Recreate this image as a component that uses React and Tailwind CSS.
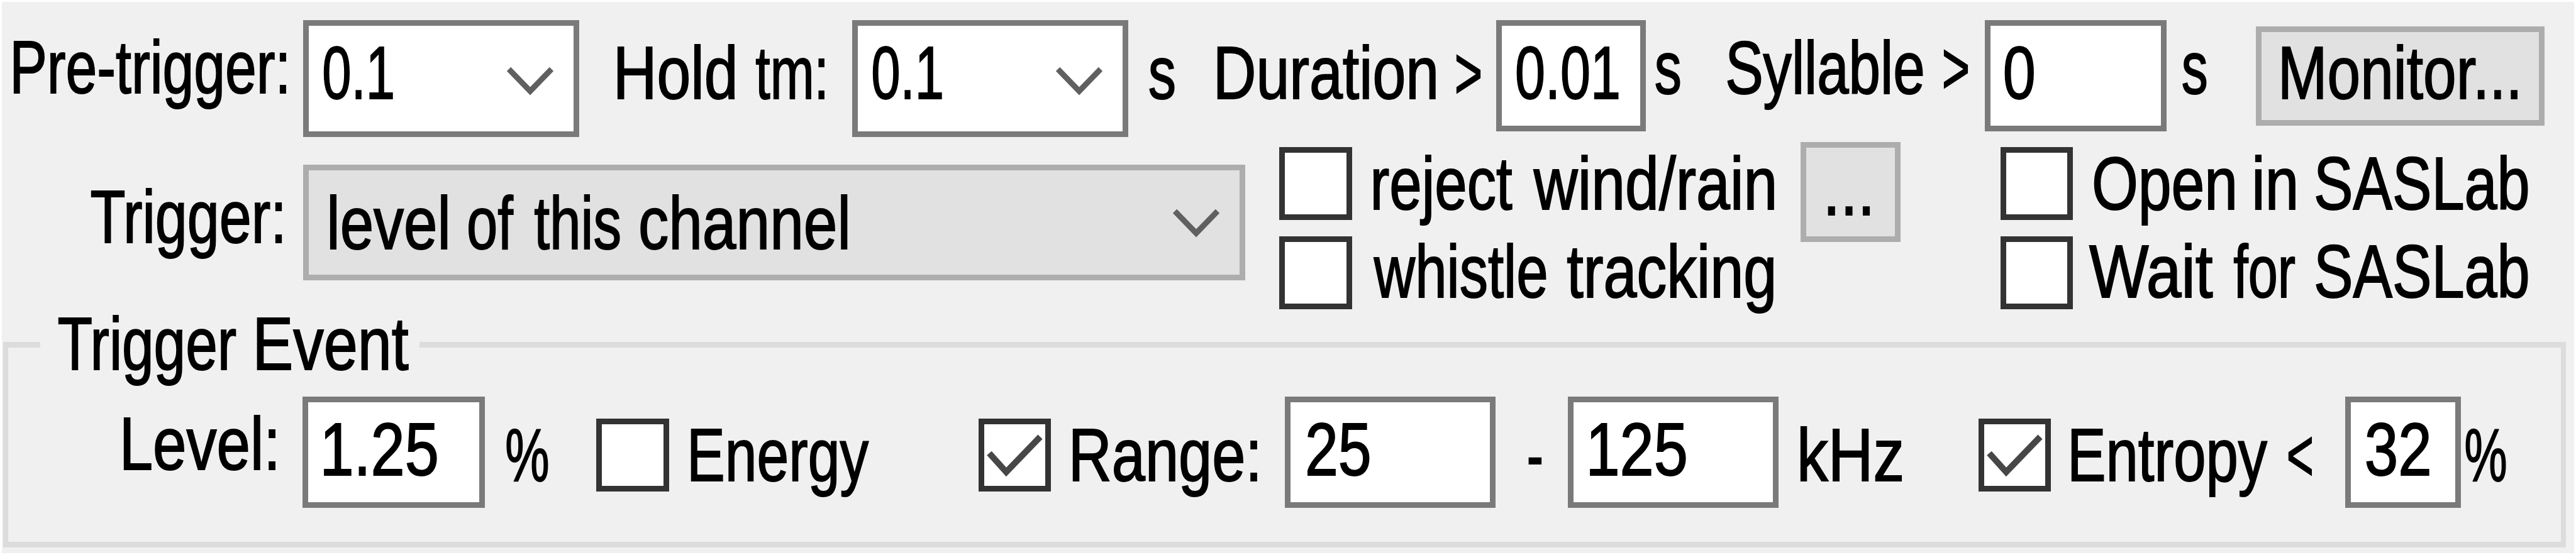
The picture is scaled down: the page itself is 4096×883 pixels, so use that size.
import { useLayoutEffect, useRef, useState } from "react";

const FONT = '118px "Liberation Sans"';

// Condensed label: the glyphs are squeezed so that the ink fills the given width.
function Label({ children, className = "" }) {
  const ref = useRef(null);
  const [transform, setTransform] = useState("none");
  useLayoutEffect(() => {
    const ctx = document.createElement("canvas").getContext("2d");
    ctx.font = FONT;
    const m = ctx.measureText(children);
    const ink = m.actualBoundingBoxLeft + m.actualBoundingBoxRight;
    const scale = ref.current.offsetWidth / ink;
    setTransform(`scaleX(${scale}) translateX(${m.actualBoundingBoxLeft}px)`);
  }, [children]);
  return (
    <div ref={ref} className={`h-[118px] shrink-0 ${className}`}>
      <span className="block w-max origin-left whitespace-pre" style={{ transform }}>
        {children}
      </span>
    </div>
  );
}

function Words({ className = "", children }) {
  return <div className={`flex shrink-0 gap-[34px] ${className}`}>{children}</div>;
}

function Field({ className = "", children }) {
  return (
    <div className={`flex shrink-0 items-start border-[9px] border-[#7a7a7a] bg-white ${className}`}>
      {children}
    </div>
  );
}

function Chevron({ className = "" }) {
  return (
    <svg viewBox="0 0 74 46" className={`h-[46px] w-[74px] shrink-0 ${className}`} fill="none" stroke="#606060" strokeWidth="9">
      <path d="M3 4 L37 39 L71 4" />
    </svg>
  );
}

function Check({ checked = false, className = "" }) {
  return (
    <div className={`h-[116px] shrink-0 border-[9px] border-[#333333] bg-white ${className}`}>
      {checked && (
        <svg viewBox="0 0 98 98" className="size-[98px]" fill="none" stroke="#474747" strokeWidth="10">
          <path d="M8 46 L35 76 L89 20" />
        </svg>
      )}
    </div>
  );
}

function Button({ className = "", children }) {
  return (
    <div className={`flex shrink-0 items-start border-[9px] border-[#adadad] bg-[#e1e1e1] ${className}`}>
      {children}
    </div>
  );
}

export default function App() {
  return (
    <div className="h-[883px] w-[4096px] overflow-hidden border-[3px] border-white bg-[#f0f0f0] font-['Liberation_Sans',sans-serif] text-[118px] leading-[118px] text-black [-webkit-text-stroke:2px_black]">
      <div className="flex h-[221px] items-start">
        <Label className="mt-[45px] ml-[19px] w-[433px]">Pre-trigger:</Label>
        <Field className="mt-[29px] ml-[27px] h-[186px] w-[439px]">
          <Label className="mt-[16px] ml-[24px] w-[109px]">0.1</Label>
          <Chevron className="mt-[65px] ml-[182px]" />
        </Field>
        <Words className="mt-[54px] ml-[61px] w-[329px]">
          <Label className="w-[186px]">Hold</Label>
          <Label className="w-[109px]">tm:</Label>
        </Words>
        <Field className="mt-[29px] ml-[44px] h-[186px] w-[439px]">
          <Label className="mt-[16px] ml-[24px] w-[109px]">0.1</Label>
          <Chevron className="mt-[65px] ml-[182px]" />
        </Field>
        <Label className="mt-[54px] ml-[34px] w-[39px]">s</Label>
        <Words className="mt-[54px] ml-[69px] w-[418px]">
          <Label className="w-[346px]">Duration</Label>
          <Label className="w-[38px]">{">"}</Label>
        </Words>
        <Field className="mt-[29px] ml-[25px] h-[177px] w-[238px]">
          <Label className="mt-[16px] ml-[24px] w-[161px]">0.01</Label>
        </Field>
        <Label className="mt-[46px] ml-[16px] w-[38px]">s</Label>
        <Words className="mt-[46px] ml-[76px] w-[382px]">
          <Label className="w-[310px]">Syllable</Label>
          <Label className="w-[38px]">{">"}</Label>
        </Words>
        <Field className="mt-[29px] ml-[27px] h-[177px] w-[289px]">
          <Label className="mt-[16px] ml-[23px] w-[46px]">0</Label>
        </Field>
        <Label className="mt-[46px] ml-[26px] w-[37px]">s</Label>
        <Button className="mt-[39px] ml-[79px] h-[158px] w-[459px]">
          <Label className="mt-[6px] ml-[33px] w-[374px]">Monitor...</Label>
        </Button>
      </div>

      <div className="flex h-[320px] items-start">
        <Label className="mt-[62px] ml-[142px] w-[303px]">Trigger:</Label>
        <Button className="mt-[38px] ml-[34px] h-[184px] w-[1498px]">
          <Words className="mt-[25px] ml-[34px] w-[822px]">
            <Label className="w-[186px]">level</Label>
            <Label className="w-[71px]">of</Label>
            <Label className="w-[135px]">this</Label>
            <Label className="w-[328px]">channel</Label>
          </Words>
          <Chevron className="mt-[61px] ml-[518px]" />
        </Button>
        <div className="mt-[10px] ml-[54px] flex shrink-0 flex-col gap-[26px]">
          <div className="flex h-[116px] items-start">
            <Check className="w-[116px]" />
            <Words className="-mt-px ml-[34px] w-[636px]">
              <Label className="w-[220px]">reject</Label>
              <Label className="w-[382px]">wind/rain</Label>
            </Words>
          </div>
          <div className="flex h-[116px] items-start">
            <Check className="w-[116px]" />
            <Words className="-mt-[3px] ml-[34px] w-[636px]">
              <Label className="w-[274px]">whistle</Label>
              <Label className="w-[328px]">tracking</Label>
            </Words>
          </div>
        </div>
        <Button className="mt-[2px] ml-[43px] h-[159px] w-[159px]">
          <Label className="mt-[7px] ml-[35px] w-[66px]">...</Label>
        </Button>
        <div className="mt-[10px] ml-[159px] flex shrink-0 flex-col gap-[26px]">
          <div className="flex h-[116px] items-start">
            <Check className="w-[115px]" />
            <Words className="-mt-px ml-[34px] w-[689px]">
              <Label className="w-[222px]">Open</Label>
              <Label className="w-[63px]">in</Label>
              <Label className="w-[336px]">SASLab</Label>
            </Words>
          </div>
          <div className="flex h-[116px] items-start">
            <Check className="w-[115px]" />
            <Words className="-mt-[3px] ml-[26px] w-[697px]">
              <Label className="w-[196px]">Wait</Label>
              <Label className="w-[97px]">for</Label>
              <Label className="w-[336px]">SASLab</Label>
            </Words>
          </div>
        </div>
      </div>

      <div className="ml-[2px] h-[327px] w-[4075px] border-x-8 border-y-[9px] border-[#dcdcdc]">
        <div className="-mt-[65px] ml-[51px] flex h-[118px] w-[603px] bg-[#f0f0f0]">
          <Words className="ml-[29px] w-[556px]">
            <Label className="w-[282px]">Trigger</Label>
            <Label className="w-[240px]">Event</Label>
          </Words>
        </div>
        <div className="flex items-start">
          <Label className="mt-[41px] ml-[184px] w-[241px]">Level:</Label>
          <Field className="mt-[25px] ml-[43px] h-[177px] w-[290px]">
            <Label className="mt-[16px] ml-[25px] w-[179px]">1.25</Label>
          </Field>
          <Label className="mt-[59px] ml-[35px] w-[65px]">%</Label>
          <Check className="mt-[60px] ml-[77px] w-[116px]" />
          <Label className="mt-[59px] ml-[35px] w-[282px]">Energy</Label>
          <Check checked className="mt-[60px] ml-[175px] w-[115px]" />
          <Label className="mt-[59px] ml-[35px] w-[293px]">Range:</Label>
          <Field className="mt-[25px] ml-[44px] h-[177px] w-[335px]">
            <Label className="mt-[16px] ml-[27px] w-[98px]">25</Label>
          </Field>
          <Label className="mt-[59px] ml-[53px] w-[20px]">-</Label>
          <Field className="mt-[25px] ml-[42px] h-[177px] w-[335px]">
            <Label className="mt-[16px] ml-[26px] w-[152px]">125</Label>
          </Field>
          <Label className="mt-[59px] ml-[35px] w-[161px]">kHz</Label>
          <Check checked className="mt-[60px] ml-[122px] w-[115px]" />
          <Words className="mt-[59px] ml-[33px] w-[382px]">
            <Label className="w-[311px]">Entropy</Label>
            <Label className="w-[37px]">{"<"}</Label>
          </Words>
          <Field className="mt-[25px] ml-[53px] h-[177px] w-[184px]">
            <Label className="mt-[16px] ml-[25px] w-[99px]">32</Label>
          </Field>
          <Label className="mt-[59px] ml-[8px] w-[63px]">%</Label>
        </div>
      </div>
    </div>
  );
}
